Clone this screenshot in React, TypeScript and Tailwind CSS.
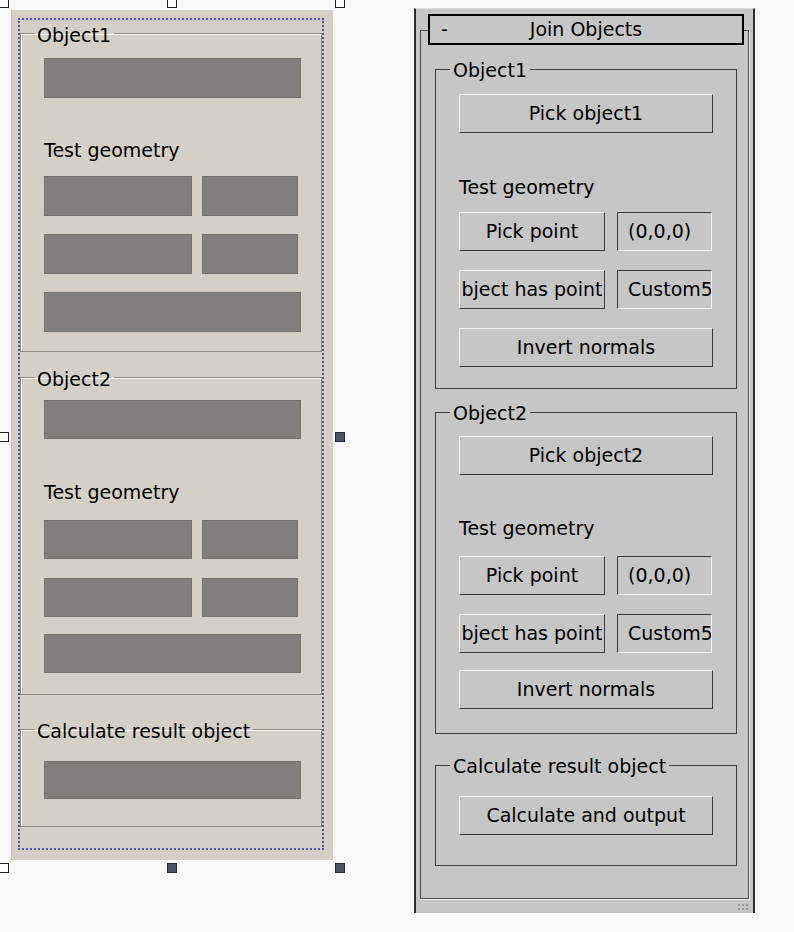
import React from "react";

const Handle = ({ className, dark }: { className: string; dark?: boolean }) => (
  <div
    className={`absolute w-[10px] h-[10px] border ${dark ? "bg-[#4b5566] border-[#262b35]" : "bg-white border-[#222]"} ${className}`}
  />
);

// grey placeholder used in the designer view
const Slot = ({ className }: { className: string }) => (
  <div className={`bg-[#817f7c] border border-[#74726f] ${className}`} />
);

const DesignGroup = ({ title, className, children }: { title: string; className: string; children: React.ReactNode }) => (
  <fieldset className={`border border-[#8d8a84] shadow-[inset_1px_1px_0_#fff] ${className}`}>
    <legend className="ml-[13px] px-[3px] pt-[4px] leading-[20px] text-[19px] text-black">{title}</legend>
    <div className="pl-[23px] pr-[20px]">{children}</div>
  </fieldset>
);

const MaxButton = ({ label, className }: { label: string; className: string }) => (
  <div
    className={`flex items-center justify-center overflow-hidden whitespace-nowrap border border-t-[#f2f2f2] border-l-[#f2f2f2] border-b-[#3a3a3a] border-r-[#3a3a3a] bg-[#c6c6c6] text-[19px] ${className}`}
  >
    {label}
  </div>
);

const MaxField = ({ value }: { value: string }) => (
  <div className="flex items-center overflow-hidden whitespace-nowrap border border-t-[#3a3a3a] border-l-[#3a3a3a] border-b-[#f2f2f2] border-r-[#f2f2f2] bg-[#c6c6c6] pl-[10px] text-[19px] h-[39px]">
    {value}
  </div>
);

const MaxGroup = ({ title, className, children }: { title: string; className: string; children: React.ReactNode }) => (
  <fieldset className={`ml-[14px] w-[302px] border border-[#3f3f3f] ${className}`}>
    <legend className="ml-[14px] px-[3px] pt-[2px] leading-[20px] text-[19px] text-black">{title}</legend>
    <div className="pl-[23px]">{children}</div>
  </fieldset>
);

const ObjectPanel = ({ n, gaps }: { n: number; gaps: string[] }) => (
  <>
    <MaxButton label={`Pick object${n}`} className={`w-[254px] h-[39px] ${gaps[0]}`} />
    <div className={`h-[22px] leading-[22px] text-[19px] ${gaps[1]}`}>Test geometry</div>
    <div className={`grid grid-cols-[146px_95px] gap-x-[12px] w-[254px] ${gaps[2]}`}>
      <MaxButton label="Pick point" className="h-[39px]" />
      <MaxField value="(0,0,0)" />
    </div>
    <div className={`grid grid-cols-[146px_95px] gap-x-[12px] w-[254px] ${gaps[3]}`}>
      <MaxButton label="bject has point" className="h-[39px]" />
      <MaxField value="Custom5" />
    </div>
    <MaxButton label="Invert normals" className={`w-[254px] h-[39px] ${gaps[4]}`} />
  </>
);

export default function App() {
  return (
    <div className="flex w-[794px] h-[932px] overflow-hidden bg-[#f9f9f9] font-['DejaVu_Sans','Liberation_Sans',sans-serif] text-black">
      {/* designer view */}
      <div className="relative w-[345px] shrink-0">
        <Handle className="left-[-1px] top-[-2px]" />
        <Handle className="left-[167px] top-[-2px]" />
        <Handle className="left-[335px] top-[-2px]" />
        <Handle className="left-[-1px] top-[432px]" />
        <Handle className="left-[335px] top-[432px]" dark />
        <Handle className="left-[-1px] top-[863px]" />
        <Handle className="left-[167px] top-[863px]" dark />
        <Handle className="left-[335px] top-[863px]" dark />

        <div className="ml-[11px] mt-[10px] w-[322px] h-[850px] bg-[#d4d0c8] border-l border-[#c4c1ba] pt-[8px] pl-[6px] pr-[9px]">
          <div className="h-[832px] border-2 border-dotted border-[#4e4ea6]">
            <DesignGroup title="Object1" className="mt-[1px] pb-[19px]">
              <Slot className="mt-[13px] h-[40px]" />
              <div className="mt-[41px] h-[22px] leading-[22px] text-[19px]">Test geometry</div>
              <div className="mt-[15px] grid grid-cols-[148px_96px] gap-x-[10px]">
                <Slot className="h-[40px]" />
                <Slot className="h-[40px]" />
              </div>
              <div className="mt-[18px] grid grid-cols-[148px_96px] gap-x-[10px]">
                <Slot className="h-[40px]" />
                <Slot className="h-[40px]" />
              </div>
              <Slot className="mt-[18px] h-[40px]" />
            </DesignGroup>

            <DesignGroup title="Object2" className="mt-[13px] pb-[21px]">
              <Slot className="mt-[11px] h-[39px]" />
              <div className="mt-[42px] h-[22px] leading-[22px] text-[19px]">Test geometry</div>
              <div className="mt-[17px] grid grid-cols-[148px_96px] gap-x-[10px]">
                <Slot className="h-[39px]" />
                <Slot className="h-[39px]" />
              </div>
              <div className="mt-[19px] grid grid-cols-[148px_96px] gap-x-[10px]">
                <Slot className="h-[39px]" />
                <Slot className="h-[39px]" />
              </div>
              <Slot className="mt-[17px] h-[39px]" />
            </DesignGroup>

            <DesignGroup title="Calculate result object" className="mt-[22px] pb-[27px]">
              <Slot className="mt-[20px] h-[38px]" />
            </DesignGroup>
          </div>
        </div>
      </div>

      {/* 3ds Max rollout */}
      <div className="ml-[69px] mt-[8px] w-[341px] h-[905px] shrink-0 border-l-2 border-r-2 border-[#2e2e2e] border-t border-t-[#dcdcdc] bg-[#c6c6c6]">
        <div className="ml-[4px] mt-[21px] w-[329px] h-[869px] border border-[#4a4a4a] shadow-[1px_1px_0_#ececec]">
          <div className="ml-[7px] -mt-[17px] w-[316px] h-[31px] border-2 border-black bg-[#c6c6c6] grid grid-cols-[1fr_auto_1fr] items-center text-[19px] leading-none">
            <span className="pl-[11px]">-</span>
            <span>Join Objects</span>
            <span />
          </div>

          <MaxGroup title="Object1" className="mt-[13px] pb-[21px]">
            <ObjectPanel n={1} gaps={["mt-[14px]", "mt-[43px]", "mt-[14px]", "mt-[19px]", "mt-[19px]"]} />
          </MaxGroup>

          <MaxGroup title="Object2" className="mt-[12px] pb-[24px]">
            <ObjectPanel n={2} gaps={["mt-[13px]", "mt-[42px]", "mt-[17px]", "mt-[19px]", "mt-[17px]"]} />
          </MaxGroup>

          <MaxGroup title="Calculate result object" className="mt-[20px] pb-[30px]">
            <MaxButton label="Calculate and output" className="mt-[20px] w-[254px] h-[39px]" />
          </MaxGroup>
        </div>
        <div className="flex justify-end pr-[4px] pt-[4px]">
          <svg width="12" height="8" viewBox="0 0 12 8">
            <rect x="1" y="1" width="2" height="2" fill="#9a9a9a" />
            <rect x="5" y="1" width="2" height="2" fill="#9a9a9a" />
            <rect x="9" y="1" width="2" height="2" fill="#9a9a9a" />
            <rect x="1" y="5" width="2" height="2" fill="#9a9a9a" />
            <rect x="5" y="5" width="2" height="2" fill="#9a9a9a" />
            <rect x="9" y="5" width="2" height="2" fill="#9a9a9a" />
          </svg>
        </div>
      </div>
    </div>
  );
}
